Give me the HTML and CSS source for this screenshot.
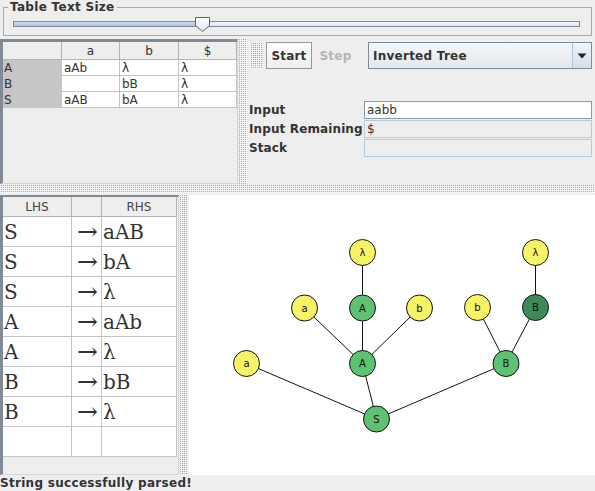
FILE: index.html
```html
<!DOCTYPE html>
<html>
<head>
<meta charset="utf-8">
<link rel="stylesheet" href="styles.css">
</head>
<body>
<div class="app">
  <fieldset class="size-panel">
    <legend>Table Text Size</legend>
    <div class="slider">
      <div class="track"><div class="fill"></div></div>
      <svg class="thumb" width="17" height="17" viewBox="0 0 17 17">
        <defs>
          <linearGradient id="tg" x1="0" y1="0" x2="0" y2="1">
            <stop offset="0" stop-color="#ffffff"/>
            <stop offset="1" stop-color="#dfe7f0"/>
          </linearGradient>
        </defs>
        <path d="M1.5 1.5 H15.5 V9.5 L8.5 15.5 L1.5 9.5 Z" fill="url(#tg)" stroke="#56657a" stroke-width="1"/>
      </svg>
    </div>
  </fieldset>

  <div class="top-split">
    <div class="scroll parse-scroll">
      <table class="parse">
        <colgroup><col class="pc0"><col class="pc1"><col class="pc2"><col class="pc3"></colgroup>
        <thead><tr><th></th><th>a</th><th>b</th><th>$</th></tr></thead>
        <tbody>
          <tr><td class="rh">A</td><td>aAb</td><td>λ</td><td>λ</td></tr>
          <tr><td class="rh">B</td><td></td><td>bB</td><td>λ</td></tr>
          <tr><td class="rh">S</td><td>aAB</td><td>bA</td><td>λ</td></tr>
        </tbody>
      </table>
    </div>
    <div class="divider vdiv"></div>
    <div class="sim">
      <div class="toolbar">
        <div class="grip"></div>
        <div class="tbtn">Start</div>
        <div class="tbtn disabled">Step</div>
        <div class="combo">
          <span class="combo-text">Inverted Tree</span>
          <div class="combo-arrow">
            <svg width="10" height="6" viewBox="0 0 10 6"><path d="M0.5 0.5 H9.5 L5 5.5 Z" fill="#222"/></svg>
          </div>
        </div>
      </div>
      <div class="fields">
        <div class="lbl">Input</div><div class="field editable">aabb</div>
        <div class="lbl">Input Remaining</div><div class="field">$</div>
        <div class="lbl">Stack</div><div class="field"></div>
      </div>
    </div>
  </div>

  <div class="divider hdiv"></div>

  <div class="bottom-split">
    <div class="scroll gram-scroll">
      <table class="grammar">
        <colgroup><col class="gc0"><col class="gc1"><col class="gc2"></colgroup>
        <thead><tr><th>LHS</th><th></th><th>RHS</th></tr></thead>
        <tbody>
          <tr><td>S</td><td class="arr">→</td><td>aAB</td></tr>
          <tr><td>S</td><td class="arr">→</td><td>bA</td></tr>
          <tr><td>S</td><td class="arr">→</td><td>λ</td></tr>
          <tr><td>A</td><td class="arr">→</td><td>aAb</td></tr>
          <tr><td>A</td><td class="arr">→</td><td>λ</td></tr>
          <tr><td>B</td><td class="arr">→</td><td>bB</td></tr>
          <tr><td>B</td><td class="arr">→</td><td>λ</td></tr>
          <tr><td></td><td></td><td></td></tr>
        </tbody>
      </table>
    </div>
    <div class="divider vdiv"></div>
    <div class="canvas">
      <svg class="tree" width="406" height="280" viewBox="0 0 406 280">
        <g class="edges" stroke="#111" stroke-width="1">
          <line x1="173.5" y1="57.5" x2="173.5" y2="113"/>
          <line x1="115.5" y1="113" x2="173.5" y2="168.5"/>
          <line x1="173.5" y1="113" x2="173.5" y2="168.5"/>
          <line x1="230.5" y1="113" x2="173.5" y2="168.5"/>
          <line x1="173.5" y1="168.5" x2="187.5" y2="224"/>
          <line x1="57.5" y1="168.5" x2="187.5" y2="224"/>
          <line x1="187.5" y1="224" x2="317" y2="168.5"/>
          <line x1="288.5" y1="112.5" x2="317" y2="168.5"/>
          <line x1="346.5" y1="112.5" x2="317" y2="168.5"/>
          <line x1="346.5" y1="57.5" x2="346.5" y2="112.5"/>
        </g>
        <g class="nodes" stroke="#111" stroke-width="1">
          <circle class="t" cx="173.5" cy="57.5" r="13"/>
          <circle class="t" cx="115.5" cy="113" r="13"/>
          <circle class="n" cx="173.5" cy="113" r="13"/>
          <circle class="t" cx="230.5" cy="113" r="13"/>
          <circle class="n" cx="173.5" cy="168.5" r="13"/>
          <circle class="t" cx="57.5" cy="168.5" r="13"/>
          <circle class="n" cx="187.5" cy="224" r="13"/>
          <circle class="t" cx="288.5" cy="112.5" r="13"/>
          <circle class="d" cx="346.5" cy="112.5" r="13"/>
          <circle class="t" cx="346.5" cy="57.5" r="13"/>
          <circle class="n" cx="317" cy="168.5" r="13"/>
        </g>
        <g class="labels">
          <text x="173.5" y="61">λ</text>
          <text x="115.5" y="116.5">a</text>
          <text x="173.5" y="116.5">A</text>
          <text x="230.5" y="116.5">b</text>
          <text x="173.5" y="172">A</text>
          <text x="57.5" y="172">a</text>
          <text x="187.5" y="227.5">S</text>
          <text x="288.5" y="116">b</text>
          <text x="346.5" y="116">B</text>
          <text x="346.5" y="61">λ</text>
          <text x="317" y="172">B</text>
        </g>
      </svg>
    </div>
  </div>

  <div class="status">String successfully parsed!</div>
</div>
</body>
</html>
```

FILE: styles.css
```css
* { box-sizing: border-box; }
html, body { margin: 0; padding: 0; }
body {
  width: 595px;
  height: 491px;
  overflow: hidden;
  background: #eeeeee;
  font-family: "DejaVu Sans", sans-serif;
  font-size: 12px;
  color: #333333;
}
.app { display: flex; flex-direction: column; height: 491px; }

/* titled slider panel */
.size-panel {
  margin: 0 3px;
  padding: 0;
  border: 1px solid #a8a8a8;
  min-width: 0;
}
.size-panel legend {
  margin-left: 4px;
  padding: 0 2px;
  font-weight: bold;
  font-size: 12px;
  line-height: 14px;
  letter-spacing: 0.3px;
  color: #333333;
}
.slider {
  position: relative;
  height: 21px;
  padding: 7px 11px 0 9px;
}
.track {
  height: 6px;
  border: 1px solid #7c8c9e;
  background: linear-gradient(#f4f6f9, #e2e8ef);
}
.fill {
  width: 186px;
  height: 100%;
  background: linear-gradient(#d2e0ef, #a9c0da);
  box-shadow: 1px 0 0 #6a7f99;
}
.thumb { position: absolute; left: 190px; top: 2px; }

/* top split */
.top-split { display: flex; margin-top: 2px; height: 146px; }
.scroll {
  background: #eeeeee;
  border-top: 3px solid #7f8a96;
  border-left: 3px solid #7f8a96;
  border-right: 1px solid #d6d6d6;
  border-bottom: 1px solid #d6d6d6;
  overflow: hidden;
}
.parse-scroll { width: 238px; margin-top: 1px; height: 145px; }

table { border-collapse: separate; border-spacing: 0; table-layout: fixed; }
th {
  background: #eeeeee;
  font-weight: normal;
  color: #333333;
  border-right: 1px solid #b4b4b4;
  border-bottom: 1px solid #b4b4b4;
  padding: 0;
  text-align: center;
}
td {
  background: #ffffff;
  border-right: 1px solid #c4c4c4;
  border-bottom: 1px solid #c4c4c4;
  padding: 0 0 0 2px;
  white-space: nowrap;
  overflow: hidden;
}

.parse { width: 234px; }
.pc0 { width: 59px; }
.pc1 { width: 58px; }
.pc2 { width: 59px; }
.pc3 { width: 58px; }
.parse thead tr { height: 18px; }
.parse tbody tr { height: 16px; }
.parse td { line-height: 14px; }
.parse td.rh {
  background: #c6c6c6;
  border-right: none;
  border-bottom: 1px solid #c6c6c6;
  padding-left: 1px;
}

.divider {
  background-color: #eeeeee;
  background-image: conic-gradient(at 1px 1px, transparent 0 25%, #a9a9a9 0 50%, transparent 0 75%, #ffffff 0);
  background-size: 2px 2px;
}
.vdiv { width: 10px; flex: none; background-clip: content-box; padding: 0 1px; }
.hdiv { height: 10px; flex: none; background-clip: content-box; padding: 1px 0; }

.sim { flex: 1; display: flex; flex-direction: column; min-width: 0; }
.toolbar { display: flex; height: 27px; margin-top: 4px; }
.grip {
  width: 12px;
  margin-left: 2px;
  background-color: #eeeeee;
  background-image: conic-gradient(at 1px 1px, transparent 0 25%, #a9a9a9 0 50%, transparent 0 75%, #ffffff 0);
  background-size: 2px 2px;
}
.tbtn {
  display: flex;
  align-items: center;
  justify-content: center;
  font-weight: bold;
  letter-spacing: 0.2px;
  color: #333333;
  width: 46px;
  margin-left: 4px;
  border: 1px solid #8e99a5;
  background: linear-gradient(#fdfdfd, #efefef);
}
.tbtn.disabled {
  width: 45px;
  margin-left: 1px;
  border-color: transparent;
  background: none;
  color: #b5b5b5;
}
.combo {
  display: flex;
  margin-left: 10px;
  width: 224px;
  border: 1px solid #7d8c9c;
  background: linear-gradient(#f4f6f9, #e3e8ee);
}
.combo-text {
  flex: 1;
  display: flex;
  align-items: center;
  padding-left: 4px;
  font-weight: bold;
  letter-spacing: 0.25px;
  color: #333333;
}
.combo-arrow {
  width: 19px;
  border-left: 1px solid #b3c3d4;
  display: flex;
  align-items: center;
  justify-content: center;
  background: linear-gradient(#f0f4f8, #d4dfea);
}

.fields {
  display: grid;
  grid-template-columns: 115px 228px;
  grid-auto-rows: 18px;
  row-gap: 1px;
  margin-top: 32px;
  margin-left: 1px;
}
.lbl {
  font-weight: bold;
  display: flex;
  align-items: center;
  white-space: nowrap;
  letter-spacing: 0.12px;
  color: #333333;
}
.field {
  border: 1px solid #b9c9da;
  background: #eeeeee;
  display: flex;
  align-items: center;
  padding-left: 2px;
  color: #333333;
}
.field.editable { background: #ffffff; border-color: #8a97a6; }

/* bottom split */
.bottom-split { display: flex; height: 281px; }
.gram-scroll { width: 179px; margin-top: 1px; height: 280px; border-top-width: 2px; }
.grammar { width: 174px; }
.gc0 { width: 69px; }
.gc1 { width: 30px; }
.gc2 { width: 75px; }
.grammar thead tr { height: 20px; }
.grammar th { color: #444444; }
.grammar tbody tr { height: 30px; }
.grammar td {
  font-family: "DejaVu Serif", serif;
  font-size: 20px;
  line-height: 24px;
  color: #333333;
  padding-left: 1px;
}
.grammar td.arr {
  text-align: right;
  padding: 0 3px 0 0;
  font-size: 25px;
  font-weight: 300;
}

.canvas { flex: 1; margin-top: 1px; height: 280px; background: #ffffff; overflow: hidden; }
.tree { display: block; }
.tree .t { fill: #f6f466; }
.tree .n { fill: #5ec272; }
.tree .d { fill: #3e8a56; }
.tree text {
  font-family: "DejaVu Sans", sans-serif;
  font-size: 10px;
  text-anchor: middle;
  fill: #111111;
}

.status {
  height: 16px;
  line-height: 16px;
  font-weight: bold;
  font-size: 12px;
  letter-spacing: 0.3px;
  color: #333333;
  white-space: nowrap;
}
```
